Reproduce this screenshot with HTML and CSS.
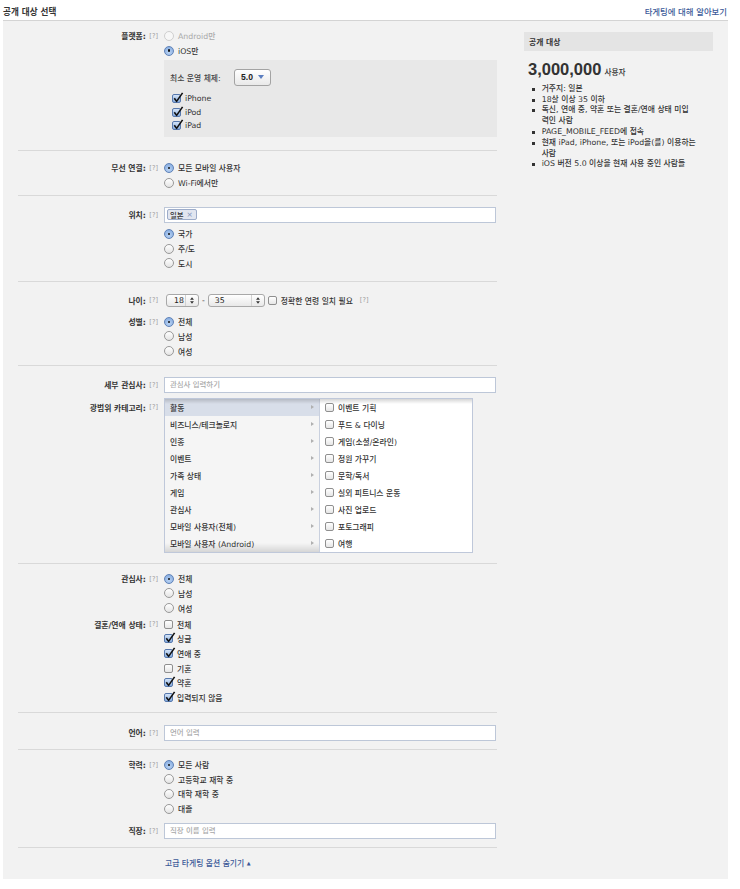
FILE: index.html
```html
<!DOCTYPE html>
<html lang="ko">
<head>
<meta charset="utf-8">
<title>공개 대상 선택</title>
<link rel="stylesheet" href="styles.css">
</head>
<body>
<div class="page">
  <div class="topbar">
    <h1 class="title">공개 대상 선택</h1>
    <a class="learn" href="#">타게팅에 대해 알아보기</a>
  </div>
  <div class="panel">
    <div class="form">
      <!-- platform -->
      <section class="sec s1">
        <div class="row">
          <div class="label"><b>플랫폼:</b><span class="q">[?]</span></div>
          <div class="ctrl">
            <div class="opt disabled"><span class="radio"></span>Android만</div>
            <div class="opt"><span class="radio on"></span>iOS만</div>
            <div class="osbox">
              <div class="os-row"><span class="os-label">최소 운영 체제:</span><span class="sel">5.0<i class="tri-down"></i></span></div>
              <div class="os-checks">
                <div class="copt"><span class="cb on"><svg viewBox="0 0 12 12"><path d="M2.3 6.2 L4.6 9.4 L10.6 0.9" fill="none" stroke="#111" stroke-width="1.6" stroke-linejoin="round"/></svg></span>iPhone</div>
                <div class="copt"><span class="cb on"><svg viewBox="0 0 12 12"><path d="M2.3 6.2 L4.6 9.4 L10.6 0.9" fill="none" stroke="#111" stroke-width="1.6" stroke-linejoin="round"/></svg></span>iPod</div>
                <div class="copt"><span class="cb on"><svg viewBox="0 0 12 12"><path d="M2.3 6.2 L4.6 9.4 L10.6 0.9" fill="none" stroke="#111" stroke-width="1.6" stroke-linejoin="round"/></svg></span>iPad</div>
              </div>
            </div>
          </div>
        </div>
      </section>

      <!-- wireless -->
      <section class="sec s2">
        <div class="row">
          <div class="label"><b>무선 연결:</b><span class="q">[?]</span></div>
          <div class="ctrl">
            <div class="opt"><span class="radio on"></span>모든 모바일 사용자</div>
            <div class="opt"><span class="radio"></span>Wi-Fi에서만</div>
          </div>
        </div>
      </section>

      <!-- location -->
      <section class="sec s3">
        <div class="row">
          <div class="label l16"><b>위치:</b><span class="q">[?]</span></div>
          <div class="ctrl">
            <div class="inp tokens"><span class="token">일본<span class="x">×</span></span></div>
            <div class="after-inp">
              <div class="opt"><span class="radio on"></span>국가</div>
              <div class="opt"><span class="radio"></span>주/도</div>
              <div class="opt"><span class="radio"></span>도시</div>
            </div>
          </div>
        </div>
      </section>

      <!-- age / gender -->
      <section class="sec s4">
        <div class="row">
          <div class="label l15"><b>나이:</b><span class="q">[?]</span></div>
          <div class="ctrl">
            <div class="age-row">
              <span class="spin w18">18<i class="arr"><svg viewBox="0 0 5 9"><path d="M0 3.6 L2.5 0.4 L5 3.6Z M0 5.4 L2.5 8.6 L5 5.4Z" fill="#333"/></svg></i></span>
              <span class="dash">-</span>
              <span class="spin w35">35<i class="arr"><svg viewBox="0 0 5 9"><path d="M0 3.6 L2.5 0.4 L5 3.6Z M0 5.4 L2.5 8.6 L5 5.4Z" fill="#333"/></svg></i></span>
              <span class="cb age-cb"></span>
              <span class="exact">정확한 연령 일치 필요</span>
              <span class="q q-exact">[?]</span>
            </div>
          </div>
        </div>
        <div class="row gender">
          <div class="label"><b>성별:</b><span class="q">[?]</span></div>
          <div class="ctrl">
            <div class="opt"><span class="radio on"></span>전체</div>
            <div class="opt"><span class="radio"></span>남성</div>
            <div class="opt"><span class="radio"></span>여성</div>
          </div>
        </div>
      </section>

      <!-- interests / categories -->
      <section class="sec s5">
        <div class="row">
          <div class="label l16"><b>세부 관심사:</b><span class="q">[?]</span></div>
          <div class="ctrl">
            <input class="inp" type="text" placeholder="관심사 입력하기">
          </div>
        </div>
        <div class="row cat-row">
          <div class="label l18"><b>광범위 카테고리:</b><span class="q">[?]</span></div>
          <div class="ctrl">
            <div class="cat">
              <div class="cat-left">
                <div class="cat-item active"><span>활동</span><i class="tri-right"></i></div>
                <div class="cat-item"><span>비즈니스/테크놀로지</span><i class="tri-right"></i></div>
                <div class="cat-item"><span>인종</span><i class="tri-right"></i></div>
                <div class="cat-item"><span>이벤트</span><i class="tri-right"></i></div>
                <div class="cat-item"><span>가족 상태</span><i class="tri-right"></i></div>
                <div class="cat-item"><span>게임</span><i class="tri-right"></i></div>
                <div class="cat-item"><span>관심사</span><i class="tri-right"></i></div>
                <div class="cat-item"><span>모바일 사용자(전체)</span><i class="tri-right"></i></div>
                <div class="cat-item"><span>모바일 사용자 (Android)</span><i class="tri-right"></i></div>
              </div>
              <div class="cat-right">
                <div class="cat-check"><span class="cb"></span>이벤트 기획</div>
                <div class="cat-check"><span class="cb"></span>푸드 &amp; 다이닝</div>
                <div class="cat-check"><span class="cb"></span>게임(소셜/온라인)</div>
                <div class="cat-check"><span class="cb"></span>정원 가꾸기</div>
                <div class="cat-check"><span class="cb"></span>문학/독서</div>
                <div class="cat-check"><span class="cb"></span>실외 피트니스 운동</div>
                <div class="cat-check"><span class="cb"></span>사진 업로드</div>
                <div class="cat-check"><span class="cb"></span>포토그래피</div>
                <div class="cat-check"><span class="cb"></span>여행</div>
              </div>
            </div>
          </div>
        </div>
      </section>

      <!-- interested in / relationship -->
      <section class="sec s6">
        <div class="row">
          <div class="label"><b>관심사:</b><span class="q">[?]</span></div>
          <div class="ctrl">
            <div class="opt"><span class="radio on"></span>전체</div>
            <div class="opt"><span class="radio"></span>남성</div>
            <div class="opt"><span class="radio"></span>여성</div>
          </div>
        </div>
        <div class="row rel">
          <div class="label"><b>결혼/연애 상태:</b><span class="q">[?]</span></div>
          <div class="ctrl">
            <div class="opt"><span class="cb"></span>전체</div>
            <div class="opt"><span class="cb on"><svg viewBox="0 0 12 12"><path d="M2.3 6.2 L4.6 9.4 L10.6 0.9" fill="none" stroke="#111" stroke-width="1.6" stroke-linejoin="round"/></svg></span>싱글</div>
            <div class="opt"><span class="cb on"><svg viewBox="0 0 12 12"><path d="M2.3 6.2 L4.6 9.4 L10.6 0.9" fill="none" stroke="#111" stroke-width="1.6" stroke-linejoin="round"/></svg></span>연애 중</div>
            <div class="opt"><span class="cb"></span>기혼</div>
            <div class="opt"><span class="cb on"><svg viewBox="0 0 12 12"><path d="M2.3 6.2 L4.6 9.4 L10.6 0.9" fill="none" stroke="#111" stroke-width="1.6" stroke-linejoin="round"/></svg></span>약혼</div>
            <div class="opt"><span class="cb on"><svg viewBox="0 0 12 12"><path d="M2.3 6.2 L4.6 9.4 L10.6 0.9" fill="none" stroke="#111" stroke-width="1.6" stroke-linejoin="round"/></svg></span>입력되지 않음</div>
          </div>
        </div>
      </section>

      <!-- language -->
      <section class="sec s7">
        <div class="row">
          <div class="label l16"><b>언어:</b><span class="q">[?]</span></div>
          <div class="ctrl">
            <input class="inp" type="text" placeholder="언어 입력">
          </div>
        </div>
      </section>

      <!-- education / work -->
      <section class="sec s8">
        <div class="row">
          <div class="label"><b>학력:</b><span class="q">[?]</span></div>
          <div class="ctrl">
            <div class="opt"><span class="radio on"></span>모든 사람</div>
            <div class="opt"><span class="radio"></span>고등학교 재학 중</div>
            <div class="opt"><span class="radio"></span>대학 재학 중</div>
            <div class="opt"><span class="radio"></span>대졸</div>
          </div>
        </div>
        <div class="row work">
          <div class="label l16"><b>직장:</b><span class="q">[?]</span></div>
          <div class="ctrl">
            <input class="inp" type="text" placeholder="직장 이름 입력">
          </div>
        </div>
      </section>

      <section class="s9">
        <div class="row">
          <div class="label"></div>
          <div class="ctrl">
            <a class="adv" href="#">고급 타게팅 옵션 숨기기 <span class="up">▲</span></a>
          </div>
        </div>
      </section>
    </div>

    <aside class="summary">
      <div class="aud-head">공개 대상</div>
      <div class="count"><span class="num">3,000,000</span><span class="unit">사용자</span></div>
      <ul class="facts">
        <li>거주지: 일본</li>
        <li>18살 이상 35 이하</li>
        <li>독신, 연애 중, 약혼 또는 결혼/연애 상태 미입<br>력인 사람</li>
        <li>PAGE_MOBILE_FEED에 접속</li>
        <li>현재 iPad, iPhone, 또는 iPod을(를) 이용하는<br>사람</li>
        <li>iOS 버전 5.0 이상을 현재 사용 중인 사람들</li>
      </ul>
    </aside>
  </div>
</div>
</body>
</html>
```

FILE: styles.css
```css
* { box-sizing: border-box; }
html, body { margin: 0; padding: 0; background: #fff; }
body {
  font-family: "DejaVu Sans", "Noto Sans CJK KR", sans-serif;
  font-size: 7.8px;
  font-weight: 500;
  color: #333;
}

.page { width: 725px; margin-left: 3px; }

.topbar {
  height: 21px;
  border-bottom: 1px solid #d4d4d4;
  display: flex;
  justify-content: space-between;
  align-items: center;
  padding-top: 1px;
}
.title { margin: 0; font-size: 8.6px; font-weight: bold; color: #333; }
.learn { font-size: 8.4px; color: #3b5998; text-decoration: none; margin-right: 1px; }

.panel {
  background: #f2f2f2;
  display: flex;
  align-items: flex-start;
}

.form { width: 479px; margin-left: 15px; flex: none; }

.sec { border-bottom: 1px solid #d9d9d9; }
.s1 { padding: 7.7px 0 13.3px; }
.s2 { padding: 9.7px 0 5.1px; }
.s3 { padding: 11px 0 10.5px; }
.s4 { padding: 11px 0 6.5px; }
.s5 { padding: 11px 0 10px; }
.s6 { padding: 7.7px 0 7.7px; }
.s7 { padding: 11.5px 0 8px; }
.s8 { padding: 7.7px 0 8px; }
.s9 { padding: 9px 0 8px; }

.row { display: flex; align-items: flex-start; }
.label {
  width: 140px;
  flex: none;
  height: 14.6px;
  display: flex;
  justify-content: flex-end;
  align-items: center;
  white-space: nowrap;
}
.label b { font-weight: bold; color: #333; }
.l15 { height: 15px; }
.l16 { height: 16px; }
.l18 { height: 19px; }
.q { color: #a0a0a0; font-size: 6.6px; font-weight: normal; margin-left: 3.5px; }

.ctrl { margin-left: 6px; width: 333px; }

.opt {
  height: 14.6px;
  display: flex;
  align-items: center;
  white-space: nowrap;
  color: #333;
}
.opt.disabled { color: #aaa; }

.radio {
  width: 10px;
  height: 10px;
  flex: none;
  border-radius: 50%;
  border: 1px solid #999;
  background: linear-gradient(#ffffff, #e4e4e4);
  margin-right: 4px;
  position: relative;
}
.opt.disabled .radio { border-color: #cfcfcf; background: #f7f7f7; }
.radio.on {
  border-color: #5f82b8;
  background: radial-gradient(circle at 50% 70%, #b8d2f3, #7fa6dc);
}
.radio.on::after {
  content: "";
  position: absolute;
  left: 2.75px;
  top: 2.75px;
  width: 2.5px;
  height: 2.5px;
  border-radius: 50%;
  background: #111;
}

.cb {
  width: 9px;
  height: 9px;
  flex: none;
  border: 1px solid #8f8f8f;
  border-radius: 2px;
  background: linear-gradient(#ffffff, #e6e6e6);
  margin-right: 4px;
  position: relative;
}
.cb.on {
  border-color: #5678ad;
  background: linear-gradient(#d4e4f8, #86acdf);
}
.cb.on svg {
  position: absolute;
  left: -1px;
  top: -3px;
  width: 12px;
  height: 12px;
}

/* OS box */
.osbox {
  margin-top: 2.6px;
  height: 76.2px;
  background: #e8e8e8;
  padding: 8.5px 0 0 6px;
}
.os-row { display: flex; align-items: center; height: 17px; }
.os-label { width: 64px; color: #444; white-space: nowrap; }
.sel {
  width: 37px;
  height: 17px;
  border: 1px solid #a3a3a3;
  border-radius: 3px;
  background: linear-gradient(#ffffff, #e9e9e9);
  display: flex;
  align-items: center;
  justify-content: space-between;
  padding: 0 6px 0 6px;
  font-family: "Liberation Sans", sans-serif;
  font-weight: bold;
  font-size: 8.6px;
  color: #222;
}
.tri-down {
  width: 0;
  height: 0;
  border-top: 4px solid #5b7ec0;
  border-left: 3.5px solid transparent;
  border-right: 3.5px solid transparent;
}
.os-checks { margin-top: 6.3px; padding-left: 2px; }
.copt { height: 13.3px; display: flex; align-items: center; color: #333; }

/* inputs */
.inp {
  display: flex;
  align-items: center;
  width: 332px;
  height: 16px;
  margin: 0;
  border: 1px solid #bdc7d8;
  background: #fff;
  padding: 0 0 0 5px;
  font: inherit;
  font-size: 7.4px;
  color: #333;
  outline: none;
}
.inp::placeholder { color: #a8a8a8; }
.tokens { padding-left: 2px; }
.token {
  display: inline-flex;
  align-items: center;
  height: 11px;
  padding: 0 3px 0 2px;
  background: #e2e6f0;
  border: 1px solid #9dacc9;
  border-radius: 2px;
  color: #333;
  white-space: nowrap;
}
.token .x { color: #8192b9; margin-left: 3px; font-size: 7.5px; }
.after-inp { margin-top: 3.7px; }

/* age */
.age-row { height: 15px; display: flex; align-items: center; white-space: nowrap; }
.spin {
  height: 13px;
  border: 1px solid #a8a8a8;
  border-radius: 3px;
  background: linear-gradient(#ffffff, #e8e8e8);
  display: flex;
  align-items: center;
  justify-content: space-between;
  padding-left: 6px;
  color: #222;
}
.w18 { width: 33px; margin-left: 2px; padding-left: 7px; }
.w35 { width: 57px; }
.arr {
  display: flex;
  align-items: center;
  height: 100%;
  padding: 0 4px 0 4px;
  border-left: 1px solid #d2d2d2;
}
.arr svg { width: 4px; height: 7px; }
.dash { margin: 0 3px; color: #333; }
.age-cb { margin-left: 3px; }
.exact { color: #333; }
.q-exact { margin-left: 7px; }
.gender { margin-top: 6.7px; }

/* categories */
.cat-row { margin-top: 5px; }
.cat {
  position: relative;
  display: flex;
  width: 309px;
  height: 155px;
  border: 1px solid #bfc8da;
  background: #fff;
}
.cat::before {
  content: "";
  position: absolute;
  left: 0;
  right: 0;
  top: 0;
  height: 5px;
  background: linear-gradient(rgba(0,0,0,0.16), rgba(0,0,0,0));
  pointer-events: none;
}
.cat-left {
  width: 155px;
  flex: none;
  border-right: 1px solid #c9d0de;
  background: linear-gradient(to top, rgba(0,0,0,0.13), rgba(0,0,0,0) 9px), #f5f5f5;
}
.cat-item {
  height: 17px;
  display: flex;
  align-items: center;
  justify-content: space-between;
  padding: 0 5px 0 5px;
  white-space: nowrap;
  color: #333;
}
.cat-item.active { background: #d8dee9; }
.tri-right {
  width: 0;
  height: 0;
  border-left: 3px solid #b0b0b0;
  border-top: 2.5px solid transparent;
  border-bottom: 2.5px solid transparent;
}
.cat-right { flex: 1; }
.cat-check {
  height: 17px;
  display: flex;
  align-items: center;
  padding-left: 5px;
  white-space: nowrap;
  color: #333;
}

.rel { margin-top: 1.7px; }
.work { margin-top: 6.9px; }

.adv {
  display: inline-block;
  margin-left: 1px;
  line-height: 12px;
  color: #3b5998;
  text-decoration: none;
}
.adv .up { font-size: 5px; vertical-align: 1px; }

/* summary */
.summary { width: 189px; margin-left: 27px; margin-top: 11px; flex: none; }
.aud-head {
  height: 19px;
  background: #e4e4e4;
  font-weight: bold;
  padding-left: 5px;
  display: flex;
  align-items: center;
  color: #333;
}
.count {
  margin-top: 8.3px;
  line-height: 20px;
  height: 20px;
  padding-left: 4px;
  white-space: nowrap;
}
.num { font-family: "Liberation Sans", sans-serif; font-size: 16.5px; font-weight: bold; color: #333; }
.unit { font-size: 7.6px; margin-left: 3px; color: #333; }
.facts {
  list-style: none;
  margin: 4.6px 0 0;
  padding: 0;
}
.facts li {
  display: flex;
  line-height: 10.8px;
  white-space: nowrap;
  color: #333;
}
.facts li::before {
  content: "";
  flex: none;
  width: 3px;
  height: 3px;
  background: #333;
  margin: 3.9px 6.7px 0 8px;
}
```
